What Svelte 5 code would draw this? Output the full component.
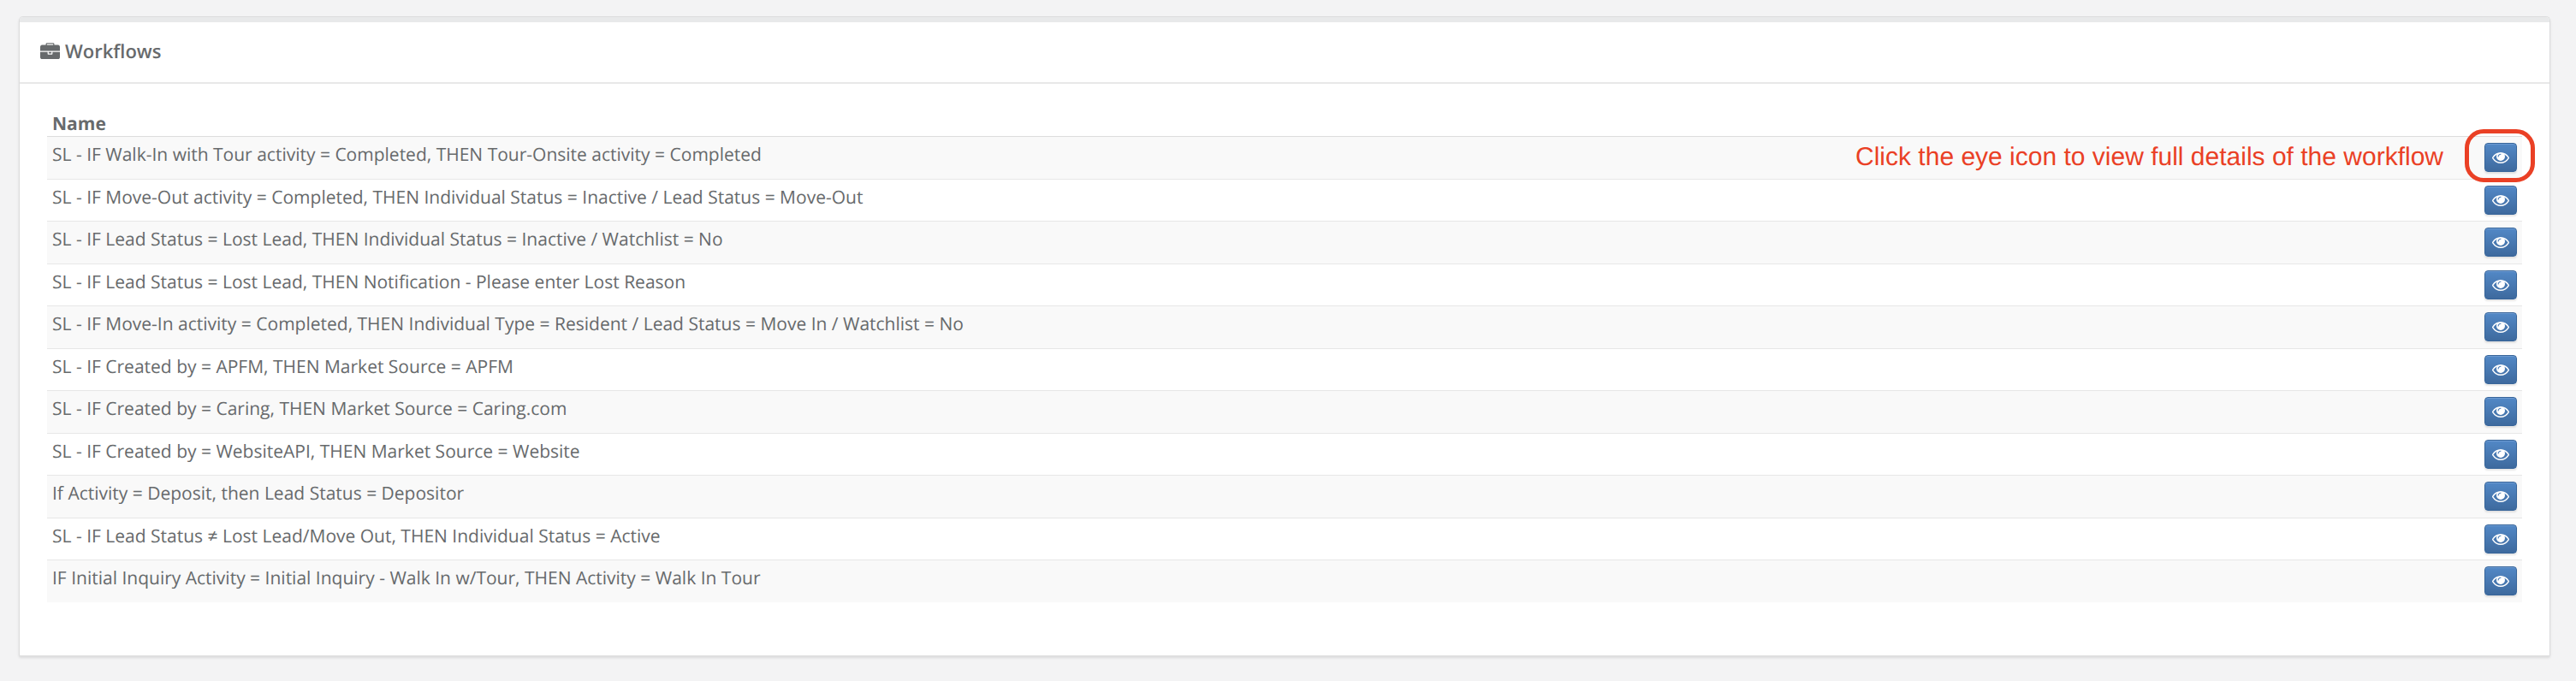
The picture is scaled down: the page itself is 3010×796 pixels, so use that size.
<script>
  const workflows = [
    'SL - IF Walk-In with Tour activity = Completed, THEN Tour-Onsite activity = Completed',
    'SL - IF Move-Out activity = Completed, THEN Individual Status = Inactive / Lead Status = Move-Out',
    'SL - IF Lead Status = Lost Lead, THEN Individual Status = Inactive / Watchlist = No',
    'SL - IF Lead Status = Lost Lead, THEN Notification - Please enter Lost Reason',
    'SL - IF Move-In activity = Completed, THEN Individual Type = Resident / Lead Status = Move In / Watchlist = No',
    'SL - IF Created by = APFM, THEN Market Source = APFM',
    'SL - IF Created by = Caring, THEN Market Source = Caring.com',
    'SL - IF Created by = WebsiteAPI, THEN Market Source = Website',
    'If Activity = Deposit, then Lead Status = Depositor',
    'SL - IF Lead Status ≠ Lost Lead/Move Out, THEN Individual Status = Active',
    'IF Initial Inquiry Activity = Initial Inquiry - Walk In w/Tour, THEN Activity = Walk In Tour'
  ];

  let selected = $state(null);
</script>

<main>
  <section class="panel">
    <header>
      <svg class="briefcase" viewBox="0 0 1792 1536" aria-hidden="true">
        <path d="M640 128h512V256H640zM1792 832v480q0 66-47 113t-113 47H160q-66 0-113-47T0 1312V832h672v160q0 26 19 45t45 19h320q26 0 45-19t19-45V832zM1024 832v128H768V832zM1792 352v384H0V352q0-66 47-113t113-47h352V96q0-40 28-68t68-28h576q40 0 68 28t28 68v96h352q66 0 113 47t47 113z" />
        <path class="handle" d="M608 96h576v96H608z" />
      </svg>
      <h1>Workflows</h1>
    </header>

    <div class="content">
      <table>
        <thead>
          <tr>
            <th scope="col">Name</th>
            <td></td>
          </tr>
        </thead>
        <tbody>
          {#each workflows as name, i}
            <tr>
              <td>{name}</td>
              <td class="actions">
                <div class="action">
                  <button type="button" aria-label="View {name}" onclick={() => (selected = i)}>
                    <svg viewBox="0 0 1792 1152" aria-hidden="true">
                      <path d="M1664 576q-152-236-381-353 61 104 61 225 0 185-131.5 316.5T896 896 579.5 764.5 448 448q0-121 61-225-229 117-381 353 133 205 333.5 326.5T896 1024t434.5-121.5T1664 576zM944 192q0-20-14-34t-34-14q-125 0-214.5 89.5T592 448q0 20 14 34t34 14 34-14 14-34q0-86 61-147t147-61q20 0 34-14t14-34zM1792 576q0 34-20 69-140 230-376.5 368.500T896 1152t-499.500-138.500T20 645Q0 610 0 576t20-69q140-229 376.500-368T896 0t499.500 139T1772 507q20 35 20 69z" />
                    </svg>
                  </button>
                  {#if i === 0}
                    <span class="ring"></span>
                    <span class="hint">Click the eye icon to view full details of the workflow</span>
                  {/if}
                </div>
              </td>
            </tr>
          {/each}
        </tbody>
      </table>
    </div>
  </section>
</main>

<style>
  :global(body) {
    margin: 0;
    background: #f3f3f4;
  }
  main {
    padding: 19px 30px 29px 22px;
    font: 21px/30px "Open Sans", sans-serif;
    color: #676a6c;
    text-rendering: geometricPrecision;
  }
  .panel {
    background: #fff;
    border: 1px solid #dcdcdd;
    border-bottom-color: #e0e0e0;
    border-radius: 5px 5px 2px 2px;
    box-shadow: 0 2px 3px rgba(0, 0, 0, 0.1);
  }
  header {
    display: flex;
    align-items: center;
    gap: 6px;
    padding: 19px 24px 21px;
    border-top: 6px solid #e8e9ea;
    border-bottom: 2px solid #e8e8e8;
    border-radius: 4px 4px 0 0;
  }
  .briefcase {
    width: 23px;
    height: 20px;
    fill: currentColor;
  }
  .briefcase .handle {
    fill: #fff;
  }
  h1 {
    margin: 0;
    font-size: 22px;
    font-weight: 600;
  }
  .content {
    padding: 30px 32px 62px;
  }
  table {
    width: 100%;
    border-collapse: separate;
    border-spacing: 0;
  }
  th,
  td {
    box-sizing: border-box;
    padding: 0 6px;
    text-align: left;
    vertical-align: top;
  }
  th {
    padding-top: 3px;
    line-height: 28px;
    font-weight: 700;
  }
  tbody td {
    height: 49px;
    padding-top: 6px;
    border-top: 1px solid #e7e7e7;
  }
  tbody tr:first-child td {
    border-top-color: #ddd;
  }
  tbody tr:nth-child(odd) td {
    height: 50px;
    background: #f9f9f9;
  }
  td.actions {
    width: 50px;
    padding-top: 7px;
  }
  .action {
    position: relative;
  }
  button {
    display: flex;
    align-items: center;
    justify-content: center;
    width: 38px;
    height: 34px;
    padding: 0;
    border: 1px solid #37659a;
    border-radius: 4px;
    background: linear-gradient(#5288c6, #3e6a9e);
    box-shadow: inset 0 1px 0 #6d9bd2, 0 2px 2px rgba(0, 0, 0, 0.1);
    color: #fff;
    cursor: pointer;
  }
  button svg {
    width: 20px;
    height: 13px;
    fill: currentColor;
  }
  .ring {
    position: absolute;
    top: -16px;
    left: -23px;
    box-sizing: border-box;
    width: 82px;
    height: 62px;
    border: 5px solid #ea4025;
    border-radius: 22px;
    pointer-events: none;
  }
  .hint {
    position: absolute;
    top: 2px;
    right: 86px;
    font: 30px/30px "Liberation Sans", Arial, sans-serif;
    color: #ea4025;
    white-space: nowrap;
  }
</style>
